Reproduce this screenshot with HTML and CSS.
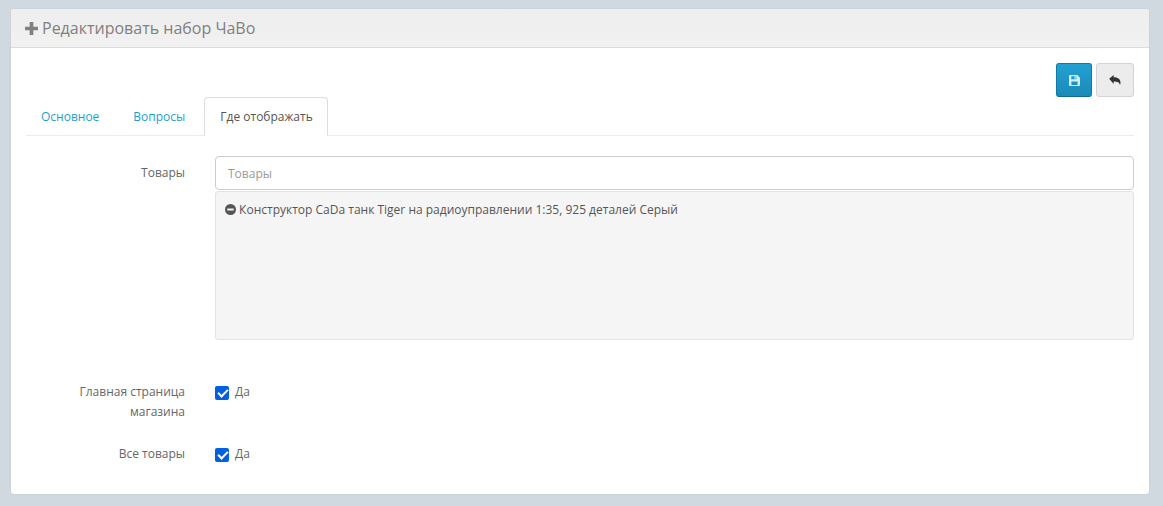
FILE: index.html
```html
<!DOCTYPE html>
<html lang="ru">

<head>
    <meta charset="utf-8">
    <meta name="viewport" content="width=device-width, initial-scale=1.0">
    <title>Редактировать набор ЧаВо</title>
    <link rel="stylesheet" href="styles.css">
</head>

<body>

    <section class="panel">
        <header class="panel-heading">
            <svg class="icon-plus" viewBox="0 0 14 14" width="13" height="13">
                <path d="M5 0h4v5h5v4H9v5H5V9H0V5h5z" fill="#808080" />
            </svg>
            <h3>Редактировать набор ЧаВо</h3>
        </header>

        <div class="panel-body">
            <div class="actions">
                <button class="btn btn-save" type="button">
                    <svg viewBox="0 0 12 12" width="11" height="11">
                        <path fill="#d5edf7" fill-rule="evenodd"
                            d="M1 0h8l3 3v8a1 1 0 0 1-1 1H1a1 1 0 0 1-1-1V1a1 1 0 0 1 1-1zm1.500 1.300v3.400h5.600V1.300zM2.600 7v3.800h6.800V7z" />
                        <path fill="#d5edf7" d="M6 1.700h1.400v2.400H6z" />
                    </svg>
                </button>
                <button class="btn btn-back" type="button">
                    <svg viewBox="0 0 14 12" width="12" height="10">
                        <path fill="#333"
                            d="M0 4.600 5.400 0v2.700c4.600 0 8 1.600 8.200 6.400.1 1-.2 2-.6 2.900-.7-3.300-2.800-4.300-7.600-4.300v3z" />
                    </svg>
                </button>
            </div>

            <nav class="tabs">
                <a href="#">Основное</a>
                <a href="#">Вопросы</a>
                <a href="#" class="active">Где отображать</a>
            </nav>

            <form>
                <div class="row row-products">
                    <label class="row-label">Товары</label>
                    <div class="row-field">
                        <input class="text-input" type="text" placeholder="Товары">
                        <div class="well">
                            <svg viewBox="0 0 12 12" width="11" height="11">
                                <path fill="#555" fill-rule="evenodd"
                                    d="M6 0a6 6 0 1 1 0 12A6 6 0 0 1 6 0zM2.500 4.800v2.400h7V4.800z" />
                            </svg>
                            Конструктор CaDa танк Tiger на радиоуправлении 1:35, 925 деталей Серый
                        </div>
                    </div>
                </div>

                <div class="row row-store">
                    <label class="row-label">Главная страница магазина</label>
                    <label class="check"><input type="checkbox" checked> Да</label>
                </div>

                <div class="row row-all">
                    <label class="row-label">Все товары</label>
                    <label class="check"><input type="checkbox" checked> Да</label>
                </div>
            </form>
        </div>
    </section>

</body>

</html>
```

FILE: styles.css
```css
* {
    box-sizing: border-box;
}

html,
body {
    height: 100%;
}

body {
    margin: 0;
    padding: 9px 14px 12px 11px;
    background: #d0d8e0;
    font-family: "Open Sans", sans-serif;
    font-size: 12px;
    color: #666;
    overflow: hidden;
}

.panel {
    height: 485px;
    background: #fff;
    border-radius: 3px;
    box-shadow: 0 0 2px rgba(0, 0, 0, 0.08);
}

.panel-heading {
    height: 39px;
    display: flex;
    align-items: center;
    gap: 4px;
    padding: 0 14px;
    background: linear-gradient(#eeeeee, #f1f1f1);
    border-bottom: 1px solid #dcdcdc;
    border-radius: 3px 3px 0 0;
}

.panel-heading h3 {
    margin: 0;
    font-size: 16px;
    font-weight: 400;
    color: #808080;
}

.panel-body {
    padding: 15px 15px 0;
}

.actions {
    display: flex;
    justify-content: flex-end;
    gap: 4px;
}

.btn {
    height: 34px;
    display: flex;
    align-items: center;
    justify-content: center;
    padding: 0;
    border-radius: 3px;
}

.btn-save {
    width: 36px;
    background: linear-gradient(#22a2d2, #1a8ab8);
    border: 1px solid #137aa5;
    border-bottom-color: #0f6a90;
}

.btn-back {
    width: 38px;
    background: #ececec;
    border: 1px solid #d4d4d4;
}

.tabs {
    display: flex;
    height: 39px;
    border-bottom: 1px solid #ececec;
}

.tabs a {
    display: flex;
    align-items: center;
    padding: 0 15px 0 14px;
    margin-right: 3px;
    color: #1e9fce;
    text-decoration: none;
    border: 1px solid transparent;
}

.tabs a.active {
    height: 39px;
    margin: 0;
    padding: 0 14px 0 15px;
    color: #555;
    background: #fff;
    border-color: #ddd #ddd #fff;
    border-radius: 4px 4px 0 0;
}

.row {
    display: grid;
    grid-template-columns: 159px 1fr;
    column-gap: 30px;
}

.row-products {
    padding-top: 20px;
}

.row-store {
    margin-top: 41px;
}

.row-all {
    margin-top: 21px;
}

.row-label {
    padding-top: 1px;
    text-align: right;
    line-height: 20px;
    color: #666;
}

.row-products .row-label {
    padding-top: 7px;
}

.text-input {
    display: block;
    width: 100%;
    height: 34px;
    padding: 0 12px;
    font: inherit;
    border: 1px solid #ccc;
    border-radius: 4px;
}

.text-input::placeholder {
    color: #999;
}

.well {
    height: 149px;
    margin-top: 1px;
    padding: 9px;
    line-height: 17px;
    color: #555;
    background: #f5f5f5;
    border: 1px solid #e3e3e3;
    border-radius: 3px;
}

.well svg {
    vertical-align: -1px;
}

.check {
    display: flex;
    align-items: center;
    gap: 6px;
    height: 21px;
}

.check input {
    appearance: none;
    position: relative;
    width: 14px;
    height: 14px;
    margin: 3px 0 0;
    background: #0060df;
    border-radius: 2px;
}

.check input::after {
    content: "";
    position: absolute;
    left: 5px;
    top: 1px;
    width: 4px;
    height: 8px;
    border: solid #fff;
    border-width: 0 2px 2px 0;
    transform: rotate(45deg);
}
```
